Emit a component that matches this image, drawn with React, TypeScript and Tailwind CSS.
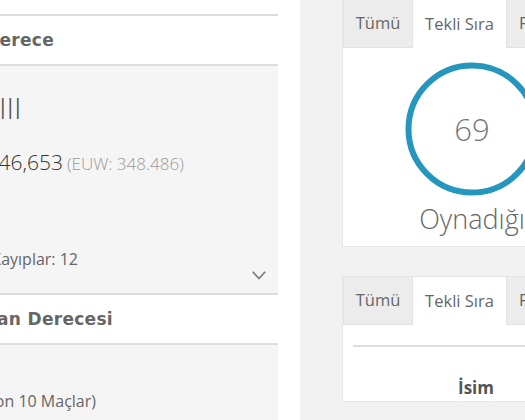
const sans = "font-['Open_Sans',sans-serif]"
const head = "font-['DejaVu_Sans',sans-serif] font-bold text-[17px] tracking-[0.3px] text-[#666]"

// text whose start runs off the left edge: anchored by its right end
const Clip = ({ end, className, children }: { end: number; className?: string; children: React.ReactNode }) => (
    <div className={`flex justify-end whitespace-nowrap ${className ?? ""}`} style={{ width: end }}>
        <span>{children}</span>
    </div>
)

const Tabs = () => (
    <div className={`flex h-[48px] shrink-0 ${sans} text-[16.5px] text-[#666]`}>
        <div className="w-[70px] shrink-0 flex items-center justify-center bg-[#ececec] border border-[#e2e2e2] border-t-0">Tümü</div>
        <div className="w-[93px] shrink-0 flex items-center justify-center bg-white">Tekli Sıra</div>
        <div className="w-[96px] shrink-0 flex items-center pl-[12px] bg-[#ececec] border border-[#e2e2e2] border-t-0 whitespace-nowrap">Flex Sıra</div>
    </div>
)

const RankPanel = () => {
    return (
        <div className="w-[278px] shrink-0 pt-[14px] overflow-hidden">
            <div className="border-t-2 border-[#dddddd] h-[50px] pt-[2px] flex items-center bg-white">
                <Clip end={54} className={head}>Derece</Clip>
            </div>
            <div className="border-t-2 border-[#dddddd] bg-[#f5f5f5] h-[229px] flex flex-col pt-[24px] pr-[12px]">
                <div className={`${sans} font-light text-[30px] leading-[36px] text-[#555] ml-[-1px]`}>III</div>
                <div className={`${sans} mt-[22px] leading-[28px] flex items-baseline whitespace-nowrap`}>
                    <Clip end={63} className="font-light text-[21px] text-[#333]">346,653</Clip>
                    <span className="ml-[4px] text-[17px] font-light text-[#999]">(EUW: 348.486)</span>
                </div>
                <Clip end={78} className={`${sans} mt-[71px] text-[16px] leading-[20px] text-[#666]`}>Galibiyetler: 15 / Kayıplar: 12</Clip>
                <div className="flex justify-end mt-[2px]">
                    <svg width="14" height="9" viewBox="0 0 14 9" className="text-[#777]">
                        <polyline points="0.8,0.8 7,7.6 13.2,0.8" fill="none" stroke="currentColor" strokeWidth="1.6" />
                    </svg>
                </div>
            </div>
            <div className="border-t-2 border-[#dddddd] h-[50px] pt-[2px] flex items-center bg-white">
                <Clip end={113} className={head}>Ortalama Oyuncudan Derecesi</Clip>
            </div>
            <div className="border-t-2 border-[#dddddd] bg-[#f5f5f5] h-[80px] pt-[46px]">
                <Clip end={96} className={`${sans} text-[16px] leading-[20px] text-[#666]`}>Ortalama Derece (Son 10 Maçlar)</Clip>
            </div>
        </div>
    )
}

const PlayedCard = () => {
    return (
        <div className="w-[260px] shrink-0 bg-white border border-[#e6e6e6] border-t-0 flex flex-col">
            <Tabs />
            <div className="flex flex-col items-center pt-[14px] pb-[10px]">
                <div className="relative w-[134px] h-[134px]">
                    <svg width="134" height="134" viewBox="0 0 134 134">
                        <circle cx="67" cy="67" r="63.5" fill="none" stroke="#2596be" strokeWidth="6" />
                    </svg>
                    <div className={`absolute inset-0 flex items-center justify-center ${sans} font-light text-[31px] text-[#777]`}>69</div>
                </div>
                <div className={`${sans} font-light text-[27px] leading-[34px] text-[#666] mt-[6px]`}>Oynadığı</div>
            </div>
        </div>
    )
}

const RankTableCard = () => {
    return (
        <div className="w-[260px] shrink-0 bg-white border border-[#e6e6e6] flex flex-col">
            <Tabs />
            <div className="px-[10px] pt-[20px]">
                <div className="border-t-2 border-[#dddddd] pt-[28px]">
                    <div className={`${sans} font-bold text-[17px] text-[#555] ml-[105px]`}>İsim</div>
                </div>
            </div>
        </div>
    )
}

export default function App() {
    return (
        <div className="w-[525px] h-[420px] overflow-hidden bg-white flex">
            <RankPanel />
            <div className="w-[22px] shrink-0" />
            <div className="flex-1 bg-[#f1f1f1] pl-[42px] flex flex-col gap-[29px] overflow-hidden">
                <PlayedCard />
                <RankTableCard />
            </div>
        </div>
    )
}
